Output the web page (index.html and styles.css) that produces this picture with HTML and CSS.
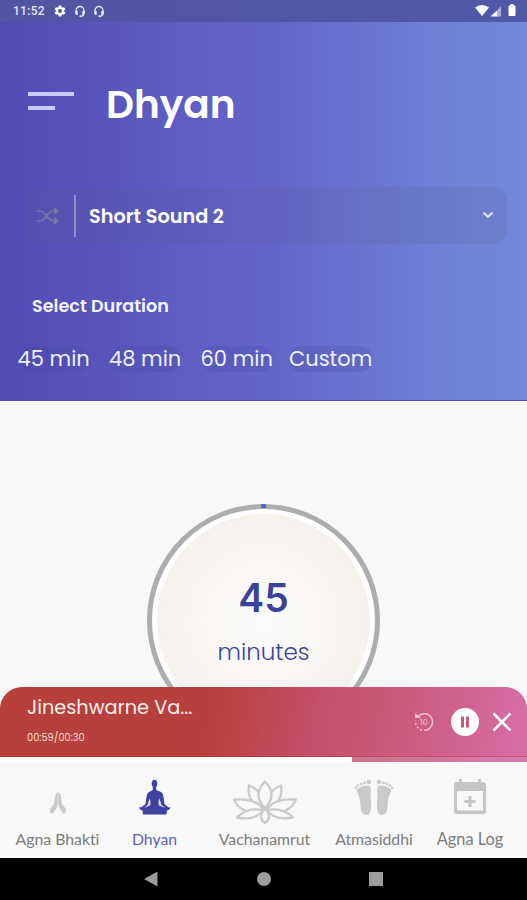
FILE: index.html
```html
<!DOCTYPE html>
<html lang="en">
<head>
<meta charset="utf-8">
<title>Dhyan</title>
<link rel="stylesheet" href="styles.css">
</head>
<body>
<div class="screen">
  <div class="status">
    <span class="clock">11:52</span>
    <svg class="gear" width="12" height="12" viewBox="0 0 24 24"><path fill="#fff" fill-rule="evenodd" d="M9.500 1h5l.6 3.200 2 1.200 3.100-1.100 2.500 4.300-2.500 2.200v2.400l2.500 2.200-2.500 4.300-3.100-1.100-2 1.200-.6 3.200h-5l-.6-3.200-2-1.200-3.100 1.100-2.500-4.300 2.500-2.200v-2.400L1.300 8.600l2.500-4.300 3.100 1.100 2-1.200zM12 8a4 4 0 1 0 0 8 4 4 0 0 0 0-8z"/></svg>
    <svg class="head" width="12" height="13" viewBox="0 0 12 13"><path d="M2 7V5.500a4 4 0 0 1 8 0V8q0 3-3.500 3.500" fill="none" stroke="#e6e7f8" stroke-width="1.300"/><path d="M1.200 6h2.500v4H2.500Q1.200 9.500 1.200 8zM8.300 6h2.500v2q0 1.500-1.300 2H8.300zM5.500 10.500h2V12h-2z" fill="#e6e7f8"/></svg>
    <svg class="head" width="12" height="13" viewBox="0 0 12 13"><path d="M2 7V5.500a4 4 0 0 1 8 0V8q0 3-3.500 3.500" fill="none" stroke="#e6e7f8" stroke-width="1.300"/><path d="M1.200 6h2.500v4H2.500Q1.200 9.500 1.200 8zM8.300 6h2.500v2q0 1.500-1.300 2H8.300zM5.500 10.500h2V12h-2z" fill="#e6e7f8"/></svg>
    <svg class="signals" width="42" height="14" viewBox="0 0 42 14"><path fill="#fff" d="M0 3.500Q7-1.500 14 3.500L7 12z"/><path fill="#fff" d="M15.500 12.500 22.500 6v6.500z"/><path fill="#a9addb" d="M22.500 6 26 2v10.500h-3.500z"/><path fill="#fff" d="M34.500 1.500h1V0h3v1.500h1q1 0 1 1v8.500q0 1-1 1h-5q-1 0-1-1v-8.500q0-1 1-1z"/></svg>
  </div>

  <header class="hero">
    <div class="titlebar">
      <div class="menu"><i class="long"></i><i class="short"></i></div>
      <h1>Dhyan</h1>
    </div>
    <div class="picker">
      <svg class="shuffle" width="22" height="18" viewBox="0 0 22 18" fill="none" stroke="#7579a6" stroke-width="1.700"><path d="M0 4h3Q6 4 9 8.500T16 14h4M0 14h3Q6 14 9 9.500T16 4h4"/><path fill="#7579a6" stroke="none" d="M17 0l5 4-5 4zM17 10l5 4-5 4z"/></svg>
      <span class="sound">Short Sound 2</span>
      <svg class="chevron" width="12" height="8" viewBox="0 0 12 8"><path d="M1.500 1.500 6 6l4.500-4.500" fill="none" stroke="#dfe4fa" stroke-width="2"/></svg>
    </div>
    <h2>Select Duration</h2>
    <div class="durations">
      <span class="d45">45 min</span><span class="d48">48 min</span><span class="d60">60 min</span><span class="custom">Custom</span>
    </div>
  </header>

  <main class="stage">
    <div class="dial">
      <i class="dot"></i>
      <div class="face">
        <div class="count">45</div>
        <div class="unit">minutes</div>
      </div>
    </div>
  </main>

  <section class="player">
    <div class="track">
      <div class="song">Jineshwarne Va...</div>
      <div class="time">00:59/00:30</div>
    </div>
    <svg class="replay" width="20" height="20" viewBox="0 0 20 20" fill="none" stroke="#f0bfce"><path d="M4 4.500A8.300 8.300 0 1 1 10 18.300" stroke-width="1.500"/><path d="M8 18A8.300 8.300 0 0 1 1.700 8.500" stroke-width="1.500" stroke-dasharray="2 2"/><path d="M1 1v5h6z" fill="#f0bfce" stroke="none"/><text class="ten" x="5.500" y="13">10</text></svg>
    <svg class="pause" width="28" height="28" viewBox="0 0 28 28"><circle cx="14" cy="14" r="14" fill="#fff"/><path d="M10 8.500h3v11h-3zM15 8.500h3v11h-3z" fill="#c9597f"/></svg>
    <svg class="close" width="20" height="20" viewBox="0 0 20 20"><path d="M1.500 1.500l17 17M18.500 1.500l-17 17" stroke="#fff" stroke-width="2.500"/></svg>
  </section>
  <div class="progress"><i></i></div>

  <nav class="tabs">
    <div class="tab bhakti">
      <svg width="18" height="24" viewBox="0 0 18 24" fill="#c9c9c9"><path d="M8.700 1 6.500 3 5 13 1 18l.5 4 2.500.5L7.500 17l1.200-4zM9.300 1l2.200 2L13 13l4 5-.5 4-2.500.5L10.500 17l-1.200-4z"/></svg>
      <span>Agna Bhakti</span>
    </div>
    <div class="tab dhyan">
      <svg width="32" height="36" viewBox="0 0 32 36" fill="#3f42a0"><ellipse cx="15.500" cy="4.500" rx="2.800" ry="3.800"/><path d="M13.800 7h3.400v4l4.800 2q2 1 2.500 5l1 7 4 3.500 2-.5-1 2.500-2.500 1-.5 4H4l-.5-4L1 30.500 0 28l2 .5L6.500 25l1-7Q8 14 10 13l3.800-2z"/><path d="M10.500 19.500 8.500 26l-3.500 3 6-2.500q1.500-3-.5-7zM20.500 19.500l2 6.500 4 3-6.500-2.500q-1.500-3 .5-7z" fill="#dcdcf0"/></svg>
      <span>Dhyan</span>
    </div>
    <div class="tab vachan">
      <svg width="64" height="44" viewBox="0 0 64 44" fill="#f8f8f8" stroke="#cacaca" stroke-width="2.300" stroke-linejoin="round"><path d="M31 28Q13 23 16 5.500q7 2 11 9M33 28q18-5 15-22.500-7 2-11 9"/><path d="M32 28Q19 15 32 1.500 45 15 32 28z"/><path d="M30 28.500Q22 18 1 19.500 4 28 13 31M34 28.500q8-10.500 29-9-3 8.500-12 11.500"/><path d="M30 30Q14 27 4 37.500 23 41 30 30zM34 30q16-3 26 7.500Q41 41 34 30z"/><path d="M32 28.500Q24 37 32 43q8-6 0-14.500z"/></svg>
      <span>Vachanamrut</span>
    </div>
    <div class="tab atma">
      <svg width="40" height="38" viewBox="0 0 40 38" fill="#cacaca"><path d="M2.500 12q6-6 13.500-4l1 4q-1 5 0 11 1 14-4.500 14-5.500 0-6-8Q6.500 20 2.500 12z"/><path d="M37.500 12q-6-6-13.500-4l-1 4q1 5 0 11-1 14 4.500 14 5.500 0 6-8 0-9 4-17z"/><g><circle cx="15" cy="4" r="2.300"/><circle cx="10.500" cy="4.800" r="1.500"/><circle cx="7" cy="6" r="1.400"/><circle cx="4" cy="7.500" r="1.300"/><circle cx="1.800" cy="9.800" r="1.200"/><circle cx="25" cy="4" r="2.300"/><circle cx="29.500" cy="4.800" r="1.500"/><circle cx="33" cy="6" r="1.400"/><circle cx="36" cy="7.500" r="1.300"/><circle cx="38.200" cy="9.800" r="1.200"/></g></svg>
      <span>Atmasiddhi</span>
    </div>
    <div class="tab log">
      <svg width="34" height="38" viewBox="0 0 34 38" fill="#c5c5c5"><path fill-rule="evenodd" d="M6 1h3v3h16V1h3v3h2q3 0 3 3v26q0 3-3 3H4q-3 0-3-3V7q0-3 3-3h2zM4 13v19.500h26V13z"/><path d="M15.500 18h3v4h4v3h-4v4h-3v-4h-4v-3h4z"/></svg>
      <span>Agna Log</span>
    </div>
  </nav>

  <footer class="system">
    <svg width="14" height="16" viewBox="0 0 14 16"><path fill="#9c9c9c" d="M13.500.5v15L0 8z"/></svg>
    <i class="home"></i>
    <i class="recent"></i>
  </footer>
</div>
</body>
</html>
```

FILE: styles.css
```css
* { box-sizing: border-box; }
body { margin: 0; background: #f8f8f8; font-family: Poppins, Inter, sans-serif; }
svg { display: block; flex: none; }
span, .song, .time, .count, .unit, h1, h2 { white-space: nowrap; }
.screen { width: 527px; height: 900px; overflow: hidden; display: flex; flex-direction: column; }

.status { height: 22px; flex: none; background: linear-gradient(90deg, #5055a4, #5058a8); display: flex; align-items: center; padding: 0 10px 0 13px; }
.clock { font: 500 12px/22px Roboto, sans-serif; color: #e8e9f8; width: 41px; letter-spacing: .3px; }
.head { margin-left: 7.500px; }
.signals { margin-left: auto; margin-top: -1px; }

.hero { height: 379px; flex: none; background: linear-gradient(90deg, #514bb5 0%, #5b5ac0 28%, #6366c9 52%, #6c7bd2 76%, #7389da 100%); border-bottom: 1px solid #5550bb; color: #fff; }
.titlebar { display: flex; padding: 57px 0 0 28px; height: 165px; }
.menu { width: 78px; padding-top: 13px; }
.menu i { display: block; height: 4px; background: #c9ccfa; margin-bottom: 10px; }
.long { width: 46px; }
.short { width: 27px; }
h1 { margin: 0; font-size: 39px; line-height: 51px; font-weight: 600; }
.picker { height: 57px; margin: 0 20px 0 21px; border-radius: 14px; background: rgba(90, 95, 145, .16); display: flex; align-items: center; padding: 0 13px 0 16px; }
.sound { margin-left: 15px; border-left: 2px solid #8e8fc9; padding-left: 13px; height: 42px; line-height: 43px; font-size: 19.300px; font-weight: 600; }
.chevron { margin-left: auto; margin-top: -2px; }
h2 { margin: 49px 0 0 32px; font-size: 17.600px; line-height: 26px; font-weight: 600; color: #f4f4ff; }
.durations { display: flex; margin: 27px 0 0 17.500px; gap: 19.500px; }
.durations span { height: 26px; line-height: 26px; border-radius: 13px; font-size: 21px; color: #eef1ff; background: rgba(66, 75, 155, .22); }
.d45, .d48, .d60 { width: 72px; }
.custom { width: 84px; margin-left: -3px; }

.stage { height: 286px; flex: none; overflow: hidden; padding-top: 103px; background: #f8f8f8; }
.dial { width: 233px; height: 233px; margin: 0 auto; border: 5px solid #adadad; border-radius: 50%; padding: 5px; background: #fff; position: relative; }
.dot { position: absolute; left: 109px; top: -5px; width: 5px; height: 4px; border-radius: 1px; background: #5260d8; }
.face { height: 100%; border-radius: 50%; background: radial-gradient(circle, #fdfcfb 0%, #f8f5f1 50%, #f2ede6 100%); text-align: center; color: #3b429c; padding-top: 58px; }
.count { font-family: Inter, sans-serif; font-size: 39px; line-height: 52px; font-weight: 600; }
.unit { font-size: 23px; line-height: 32px; margin-top: 12px; font-weight: 300; }

.player { height: 70px; flex: none; border-radius: 22px 22px 0 0; background: linear-gradient(100deg, #b8403b 0%, #b8403c 40%, #c4506a 60%, #cc5c80 78%, #d66ea8 100%); border-bottom: 1px solid rgba(178, 30, 30, .3); display: flex; color: #fff; padding: 0 15px 0 27px; align-items: center; }
.track { align-self: flex-start; padding-top: 7px; margin-right: auto; }
.song { font-size: 19.300px; line-height: 28px; color: #fff0ef; }
.time { font-size: 9.800px; line-height: 14px; margin-top: 9px; color: #f9dcd8; }
.ten { font: 8px Inter, sans-serif; fill: #f0bfce; stroke: none; }
.pause { margin-left: 17px; }
.close { margin-left: 13px; }
.progress { height: 5px; flex: none; background: #fff; }
.progress i { display: block; height: 5px; margin-left: 352px; background: linear-gradient(90deg, #cc748d, #d87aae); }

.tabs { height: 96px; flex: none; background: #f8f8f8; display: flex; }
.tab { display: flex; flex-direction: column; align-items: center; justify-content: flex-end; padding-bottom: 8px; }
.tab span { font-family: Lato, sans-serif; font-size: 15.800px; line-height: 22px; color: #7c7c7c; font-variant-ligatures: none; }
.bhakti { width: 115px; }
.dhyan { width: 79px; }
.vachan { width: 141px; }
.atma { width: 78px; }
.log { width: 114px; }
.bhakti svg, .dhyan svg { margin-bottom: 13px; }
.vachan svg { margin-bottom: 4px; }
.atma svg, .log svg { margin-bottom: 12px; }
.tab.log span { font-size: 16.400px; }
.tab.dhyan span { color: #6163b4; }

.system { flex: 1; background: #000; display: flex; align-items: center; padding-left: 144px; }
.home { width: 14px; height: 14px; border-radius: 50%; background: #9c9c9c; margin-left: 99px; }
.recent { width: 14px; height: 14px; background: #9c9c9c; margin-left: 98px; }
```
